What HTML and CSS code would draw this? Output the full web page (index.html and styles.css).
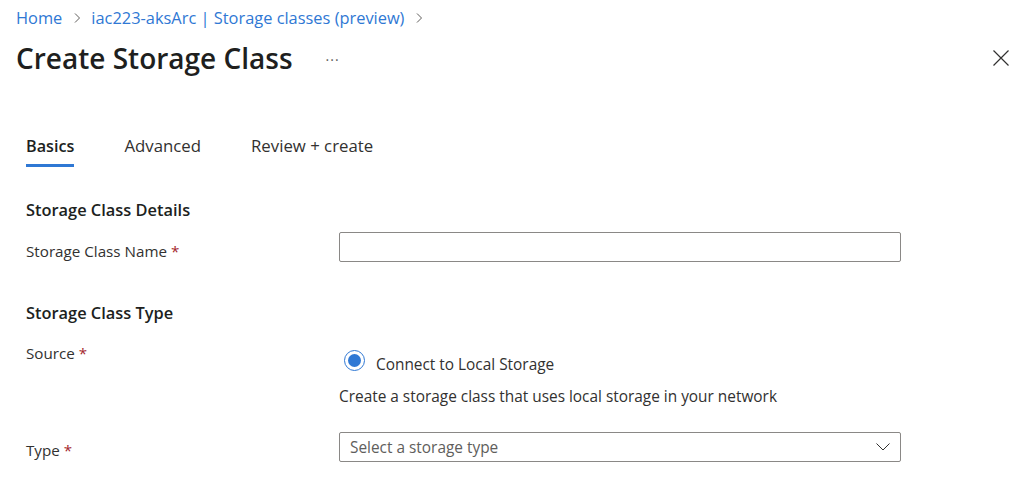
FILE: index.html
```html
<!DOCTYPE html>
<html>
<head>
<meta charset="utf-8">
<link rel="stylesheet" href="styles.css">
</head>
<body>
<div class="page">
  <nav class="crumbs">
    <a class="crumb">Home</a>
    <svg class="sep" width="8" height="12" viewBox="0 0 8 12"><path d="M2 1.5 L6.5 6 L2 10.5" fill="none" stroke="#605e5c" stroke-width="1"/></svg>
    <a class="crumb">iac223-aksArc | Storage classes (preview)</a>
    <svg class="sep" width="8" height="12" viewBox="0 0 8 12"><path d="M2 1.5 L6.5 6 L2 10.5" fill="none" stroke="#605e5c" stroke-width="1"/></svg>
  </nav>
  <header class="titlebar">
    <h1 class="title">Create Storage Class</h1>
    <span class="more">&middot;&middot;&middot;</span>
    <button class="close" aria-label="Close">
      <svg width="16" height="16" viewBox="0 0 16 16"><path d="M0.5 0.5 L15.5 15.5 M15.5 0.5 L0.5 15.5" stroke="#323130" stroke-width="1.2" fill="none"/></svg>
    </button>
  </header>
  <div class="tabs">
    <div class="tab active">Basics</div>
    <div class="tab">Advanced</div>
    <div class="tab">Review + create</div>
  </div>
  <section class="form">
    <h2 class="section">Storage Class Details</h2>
    <div class="row row-name">
      <label class="label">Storage Class Name <span class="req">*</span></label>
      <div class="field"><div class="input"></div></div>
    </div>
    <h2 class="section section-type">Storage Class Type</h2>
    <div class="row row-source">
      <label class="label label-source">Source <span class="req">*</span></label>
      <div class="field">
        <div class="radio-line">
          <span class="radio"><span class="dot"></span></span>
          <span class="radio-text">Connect to Local Storage</span>
        </div>
        <div class="desc">Create a storage class that uses local storage in your network</div>
      </div>
    </div>
    <div class="row row-type">
      <label class="label label-type">Type <span class="req">*</span></label>
      <div class="field">
        <div class="select">
          <span class="placeholder">Select a storage type</span>
          <svg class="chev" width="14" height="8" viewBox="0 0 14 8"><path d="M0.5 0.5 L7 7 L13.5 0.5" fill="none" stroke="#323130" stroke-width="1"/></svg>
        </div>
      </div>
    </div>
  </section>
</div>
</body>
</html>
```
FILE: styles.css
```css
* { box-sizing: border-box; }
html, body { margin: 0; padding: 0; background: #fff; }
body {
  font-family: "Open Sans", "Noto Sans", sans-serif;
  color: #323130;
  width: 1023px;
  height: 499px;
  overflow: hidden;
}
.page { position: relative; }
.crumbs {
  display: flex;
  align-items: center;
  padding: 8px 0 0 16px;
  height: 28px;
  font-size: 16.4px;
  line-height: 20px;
}
.crumb { color: #2f78d4; text-decoration: none; }
.sep { margin: 0 10px 0 11px; }
.titlebar {
  display: flex;
  align-items: center;
  height: 40px;
  margin-top: 10px;
  padding-left: 16px;
  padding-right: 14px;
}
.title {
  margin: 0;
  font-size: 28px;
  font-weight: 600;
  line-height: 40px;
  color: #201f1e;
}
.more {
  margin-left: 33px;
  padding-top: 3px;
  font-size: 14px;
  color: #605e5c;
  letter-spacing: 1px;
  line-height: 14px;
}
.close {
  margin-left: auto;
  border: 0;
  background: none;
  padding: 0;
  width: 16px;
  height: 16px;
  display: flex;
}
.tabs {
  display: flex;
  gap: 50px;
  margin-top: 57px;
  padding-left: 26px;
}
.tab {
  font-size: 16.8px;
  line-height: 22px;
  padding-bottom: 7px;
  border-bottom: 3px solid transparent;
  color: #323130;
}
.tab.active {
  font-size: 16.2px;
  font-weight: 600;
  border-bottom-color: #2f78d4;
  color: #201f1e;
}
.form { padding-left: 26px; }
.section {
  margin: 32px 0 0;
  font-size: 16.4px;
  font-weight: 600;
  line-height: 22px;
  color: #201f1e;
}
.section-type { margin-top: 40px; }
.row { display: flex; }
.label {
  width: 313px;
  flex: none;
  font-size: 15.2px;
  line-height: 20px;
  padding-top: 9px;
}
.req { color: #a4262c; }
.field { width: 562px; }
.row-name { margin-top: 11px; }
.input, .select {
  height: 30px;
  border: 1px solid #8a8886;
  border-radius: 2px;
  background: #fff;
}
.row-source { margin-top: 19px; }
.label-source { padding-top: 0; }
.label-type { padding-top: 8px; }
.radio-line {
  display: flex;
  align-items: flex-start;
  margin-top: 7px;
  padding-left: 5px;
  height: 24px;
}
.radio {
  width: 21px;
  height: 21px;
  border: 1px solid #2f78d4;
  border-radius: 50%;
  display: flex;
  align-items: center;
  justify-content: center;
  flex: none;
}
.dot {
  width: 13px;
  height: 13px;
  border-radius: 50%;
  background: #2f78d4;
}
.radio-text {
  margin-left: 11px;
  font-size: 15.4px;
  line-height: 20px;
  padding-top: 5px;
}
.desc {
  margin-top: 13px;
  font-size: 15.4px;
  line-height: 20px;
}
.row-type { margin-top: 25px; }
.select {
  display: flex;
  align-items: center;
  padding: 0 10px;
}
.placeholder {
  font-size: 15.4px;
  color: #605e5c;
}
.chev { margin-left: auto; margin-right: 0; }
```
